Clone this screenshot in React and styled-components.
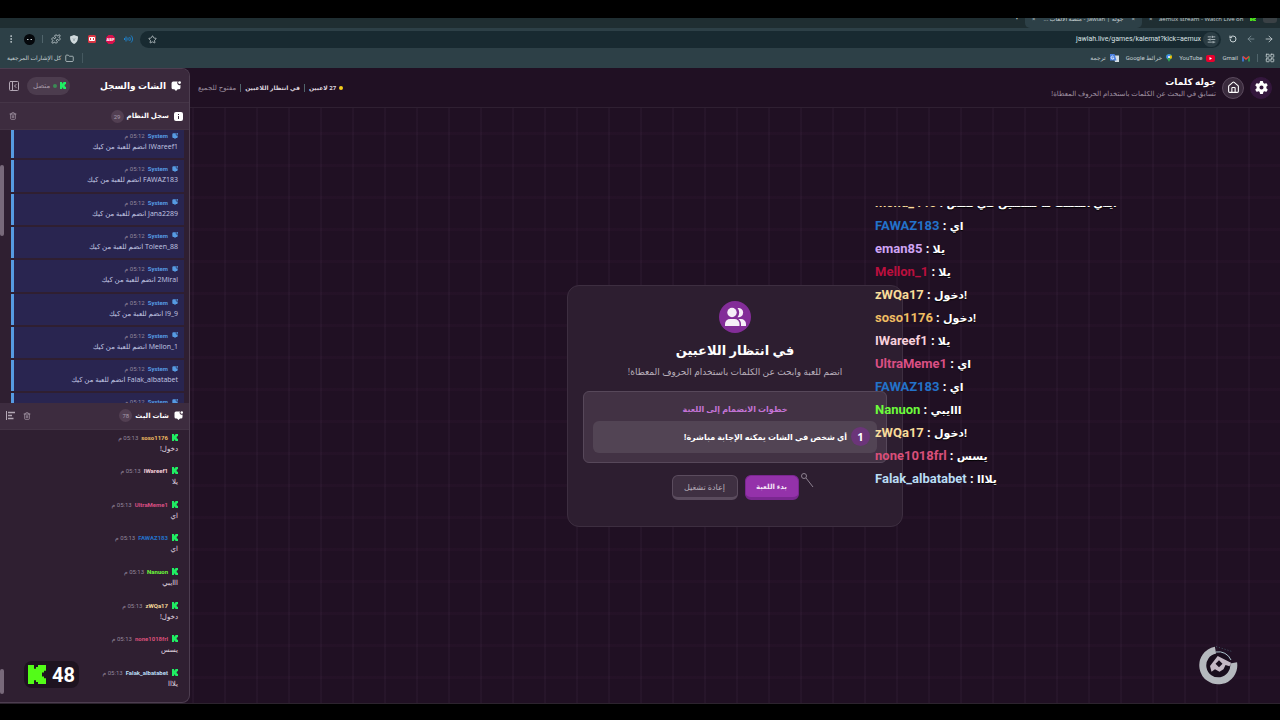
import React from 'react';
import styled, { createGlobalStyle } from 'styled-components';
import {
    EllipsisVertical, Puzzle, Star, RotateCw, ArrowLeft, ArrowRight, SlidersHorizontal,
    Folder, LayoutGrid, PanelLeftClose, Trash2, House,
} from 'lucide-react';
import { FaGear } from 'react-icons/fa6';

const GlobalStyle = createGlobalStyle`
    * { box-sizing: border-box; }
    body {
        margin: 0;
        background: #000000;
        font-family: "Open Sans", "DejaVu Sans", sans-serif;
        color: #ffffff;
    }
    button, input { font: inherit; color: inherit; padding: 0; border: 0; background: none; }
    ul, ol, p, h1, h2, h3 { margin: 0; padding: 0; list-style: none; }
    a { color: inherit; text-decoration: none; }
    svg { display: block; flex: none; }
`;

const Screen = styled.div`
    display: flex;
    flex-direction: column;
    height: 100vh;
    padding: 18px 0 16px;
    position: relative;
    overflow: hidden;
`;

/* ---------- browser ---------- */

const TabStrip = styled.div`
    display: flex;
    flex: none;
    height: 10px;
    padding-right: 3px;
    overflow: hidden;
    background: #1f2e32;
    color: #c3cdd0;
    font-size: 6px;
    line-height: 2px;
    white-space: nowrap;
`;

const Tab = styled.div`
    display: flex;
    justify-content: space-between;
    width: ${p => p.$width}px;
    padding: 0 7px;
    border-radius: 0 0 5px 5px;
    background: ${p => (p.$active ? '#2d4047' : 'transparent')};
`;

const TabAvatar = styled.span`
    width: 14px;
    height: 5px;
    border-radius: 0 0 3px 3px;
    background: #3a4145;
`;

const Toolbar = styled.div`
    display: flex;
    align-items: center;
    flex: none;
    gap: 6px;
    height: 22px;
    padding: 0 5px;
    background: #2d4047;
    color: #c9d3d6;
`;

const IconButton = styled.button`
    display: flex;
    align-items: center;
    justify-content: center;
    flex: none;
    width: 12px;
    height: 12px;
    color: ${p => p.$color || 'inherit'};
`;

const AddressBar = styled.div`
    display: flex;
    align-items: center;
    flex: 1;
    gap: 2px;
    height: 17px;
    padding: 0 2px 0 6px;
    border-radius: 9px;
    background: #182a31;
`;

const SiteButton = styled(IconButton)`
    width: 16px;
    height: 15px;
    border-radius: 8px;
    background: #2b3d44;
`;

const AddressInput = styled.input`
    flex: 1;
    min-width: 0;
    height: 14px;
    direction: ltr;
    text-align: right;
    font-family: Roboto, sans-serif;
    font-size: 7px;
    color: #dbe3e5;
    outline: none;
`;

const Divider = styled.span`
    width: 1px;
    height: 8px;
    background: #50646b;
`;

const Extensions = styled.div`
    display: flex;
    align-items: center;
    gap: 6px;

    ${Divider} {
        margin: 0 1px;
    }
`;

const Bookmarks = styled.nav`
    display: flex;
    align-items: center;
    flex: none;
    gap: 7px;
    height: 18px;
    padding: 0 5px 2px 7px;
    background: #2d4047;
    color: #c5d0d3;
    font-family: Roboto, "DejaVu Sans", sans-serif;
    font-size: 6px;
    line-height: 10px;
`;

const Bookmark = styled.a`
    display: flex;
    align-items: center;
    gap: 4px;
    margin-right: ${p => (p.$end ? 'auto' : '0')};
    padding-right: ${p => (p.$end ? '8px' : '0')};
    border-right: ${p => (p.$end ? '1px solid #455960' : '0')};
`;

/* ---------- game page ---------- */

const Page = styled.div`
    display: flex;
    flex: 1;
    min-height: 0;
    border-bottom: 1px solid #2c232e;
    background: #201023;
`;

const Main = styled.main`
    display: flex;
    flex-direction: column;
    flex: 1;
    min-width: 0;
`;

const TopBar = styled.header`
    display: flex;
    align-items: center;
    gap: 6px;
    height: 40px;
    padding: 0 8px;
    border-bottom: 1px solid #2f2032;
`;

const RoundButton = styled.button`
    display: flex;
    align-items: center;
    justify-content: center;
    width: 22px;
    height: 22px;
    border: 1px solid ${p => (p.$filled ? '#5a4a5d' : '#34173d')};
    border-radius: 50%;
    background: ${p => (p.$filled ? '#3a2b3d' : '#34173d')};
`;

const Title = styled.h1`
    font-size: 9px;
    line-height: 12px;
`;

const Subtitle = styled.p`
    color: #a093a3;
    font-size: 7px;
    line-height: 12px;
`;

const Status = styled.div`
    display: flex;
    align-items: center;
    gap: 4px;
    margin-right: auto;
    font-size: 6px;
    line-height: 10px;
    color: #ded5df;
`;

const StatusItem = styled.span`
    display: flex;
    align-items: center;
    gap: 3px;
    font-size: ${p => (p.$dim ? 7 : 6)}px;
    font-weight: ${p => (p.$dim ? 400 : 700)};
    color: ${p => (p.$dim ? '#9a8c9d' : 'inherit')};

    &::before {
        content: "";
        display: ${p => (p.$dot ? 'block' : 'none')};
        width: 4px;
        height: 4px;
        border-radius: 50%;
        background: #f5cf1b;
    }
`;

const Board = styled.section`
    display: flex;
    align-items: center;
    justify-content: center;
    flex: 1;
    background-image:
        linear-gradient(to right, rgba(120, 80, 125, 0.08) 2px, transparent 2px),
        linear-gradient(to bottom, rgba(110, 50, 100, 0.06) 3px, transparent 3px);
    background-size: 32px 32px;
    background-position: 2px 24px;
`;

const Lobby = styled.div`
    display: flex;
    flex-direction: column;
    align-items: center;
    width: 336px;
    padding: 15px 15px 26px;
    border: 1px solid #3d2e40;
    border-radius: 12px;
    background: #2d1e30;
`;

const LobbyIcon = styled.div`
    display: flex;
    align-items: center;
    justify-content: center;
    width: 32px;
    height: 32px;
    border-radius: 50%;
    background: #832d98;
`;

const LobbyTitle = styled.h2`
    margin-top: 6px;
    font-size: 13px;
    line-height: 22px;
`;

const LobbyText = styled.p`
    margin: 3px 0 11px;
    color: #b9afbb;
    font-size: 9px;
    line-height: 16px;
`;

const Steps = styled.div`
    width: 100%;
    padding: 9px;
    border: 1px solid #57485a;
    border-radius: 6px;
    background: #423244;
    text-align: center;
`;

const StepsTitle = styled.h3`
    margin-bottom: 4px;
    color: #c474d6;
    font-size: 8px;
    line-height: 16px;
`;

const Step = styled.li`
    display: flex;
    align-items: center;
    gap: 4px;
    height: 32px;
    padding: 0 7px;
    border-radius: 6px;
    background: #524454;
    font-size: 8px;
    font-weight: 700;
`;

const StepNumber = styled.span`
    width: 19px;
    border-radius: 50%;
    background: #6b3579;
    font-size: 11px;
    line-height: 19px;
`;

const Actions = styled.div`
    display: flex;
    gap: 7px;
    margin-top: 12px;
    position: relative;
`;

const ActionButton = styled.button`
    min-width: ${p => (p.$primary ? 54 : 66)}px;
    height: 25px;
    padding: 0 8px;
    border: 1px solid ${p => (p.$primary ? '#7a2790' : '#5b4c5e')};
    border-bottom-width: 3px;
    border-radius: 6px;
    background: ${p => (p.$primary ? '#9432aa' : '#3f3042')};
    color: ${p => (p.$primary ? '#f4e6f7' : '#b9afbb')};
    font-size: ${p => (p.$primary ? 7 : 8)}px;
    font-weight: ${p => (p.$primary ? 700 : 400)};
`;

const Pointer = styled.svg`
    position: absolute;
    top: -3px;
    right: -15px;
`;

/* ---------- sidebar ---------- */

const Sidebar = styled.aside`
    display: flex;
    flex-direction: column;
    flex: 0 0 190px;
    overflow: hidden;
    border: 1px solid #4d3e50;
    border-left: 0;
    border-radius: 0 8px 8px 0;
    background: #2f1f31;
`;

const SideHeader = styled.header`
    display: flex;
    align-items: center;
    gap: 5px;
    flex: none;
    height: 34px;
    padding: 0 8px;
    border-bottom: 1px solid #453547;
    background: #3a293c;
`;

const SideTitle = styled.h2`
    margin-left: auto;
    font-size: 9px;
    line-height: 16px;
`;

const Connected = styled.span`
    display: flex;
    align-items: center;
    gap: 3px;
    height: 18px;
    margin-left: 3px;
    padding: 0 4px 0 6px;
    border-radius: 9px;
    background: #4c3c4e;
    color: #a69aa8;
    font-size: 7px;
`;

const OnlineDot = styled.i`
    width: 4px;
    height: 4px;
    border-radius: 50%;
    background: #3b8b54;
`;

const SectionHeader = styled.header`
    display: flex;
    align-items: center;
    gap: 5px;
    flex: none;
    height: 27px;
    padding: 0 6px 0 ${p => (p.$tight ? 5 : 7)}px;
    border-bottom: 1px solid #433345;
    background: #3d2c3f;
    color: #ffffff;
`;

const SectionTitle = styled.h3`
    font-size: 7px;
    line-height: 12px;
`;

const Count = styled.span`
    min-width: 13px;
    margin: 0 -2px 0 auto;
    border-radius: 7px;
    background: #523f52;
    color: #a89cad;
    font-family: Roboto, sans-serif;
    font-size: 6px;
    line-height: 13px;
    text-align: center;
`;

const SmallButton = styled(IconButton)`
    width: 11px;
    color: #b3a7b5;
`;

const ListArea = styled.div`
    flex: 1 1 0;
    min-height: 0;
    overflow: hidden;
    position: relative;
    padding: 0 5px 0 11px;
`;

const Thumb = styled.span`
    position: absolute;
    left: 0;
    top: ${p => p.$top};
    width: 4px;
    height: ${p => p.$size};
    border-radius: 2px;
    background: #78697a;
`;

const SystemList = styled.ul`
    display: grid;
    grid-auto-rows: 1fr;
    height: 110%;
    margin-top: -3px;
`;

const ChatList = styled.ul`
    display: flex;
    flex-direction: column;
    justify-content: space-between;
    height: 100%;
    padding-bottom: 12px;
`;

const Entry = styled.li`
    padding: ${p => (p.$system ? 3 : 2)}px 6px 0;
    border-bottom: ${p => (p.$system ? '2px solid #2f1f31' : '0')};
    background: ${p => (p.$system ? '#292550' : 'transparent')};
    box-shadow: ${p => (p.$system ? 'inset 3px 0 #569be2' : 'none')};
    color: ${p => (p.$system ? '#c3c8e4' : '#e2dae3')};
    font-size: 7px;
    line-height: 12px;
`;

const EntryHead = styled.div`
    display: flex;
    align-items: center;
    gap: 3px;
    color: ${p => p.$color};
    font-family: Roboto, "DejaVu Sans", sans-serif;
    font-size: 6px;
    line-height: 11px;

    b { margin-right: 1px; }
`;

const Time = styled.time`
    color: #93879c;
`;

/* ---------- stream overlays ---------- */

const StreamChat = styled.ul`
    display: flex;
    flex-direction: column;
    justify-content: flex-end;
    position: absolute;
    left: 875px;
    top: 206px;
    height: 284px;
    overflow: hidden;
    direction: ltr;
    font-family: Roboto, "DejaVu Sans", sans-serif;
    font-size: 13px;
    font-weight: 700;
    white-space: nowrap;
`;

const StreamLine = styled.li`
    flex: none;
    height: 23px;
    line-height: 23px;
`;

const StreamName = styled.span`
    color: ${p => p.$color};
`;

const Said = styled.span`
    font-size: 11px;
    line-height: 11px;
    text-shadow: 0 1px 1px #000000;
`;

const KickCount = styled.div`
    display: flex;
    align-items: center;
    gap: 6px;
    position: absolute;
    left: 24px;
    bottom: 32px;
    height: 27px;
    padding: 0 4px;
    border-radius: 8px;
    background: #1e1320;
    direction: ltr;
    font-family: Roboto, sans-serif;
    font-size: 20px;
    font-weight: 700;
`;

const Watermark = styled.svg`
    position: absolute;
    right: 41px;
    bottom: 35px;
`;

const KickIcon = ({ width = 6, height = 7, color = '#1fee63' }) => (
    <svg width={width} height={height} viewBox="0 0 18 20" preserveAspectRatio="none" fill={color}>
        <path d="M0 0h6v4h2V2h2V0h8v6h-2v2h-2v4h2v2h2v6h-8v-2H8v-2H6v4H0z" />
    </svg>
);

const ChatIcon = ({ size = 9 }) => (
    <svg width={size} height={size} viewBox="0 0 18 18" fill="currentColor">
        <path d="M4 1h8a4 4 0 0 0 5 6v5a3 3 0 0 1-3 3h-2l-3 3-3-3H4a3 3 0 0 1-3-3V4a3 3 0 0 1 3-3z" />
        <circle cx="15.500" cy="2.800" r="2.500" />
    </svg>
);

const InfoIcon = () => (
    <svg width="9" height="9" viewBox="0 0 18 18">
        <rect width="18" height="18" rx="4" fill="#ffffff" />
        <path d="M9 8v6M9 4v2" stroke="#3d2c3f" strokeWidth="2" />
    </svg>
);

const AlignIcon = () => (
    <svg width="9" height="9" viewBox="0 0 18 18" stroke="currentColor" strokeWidth="2">
        <path d="M1 0v18" />
        <path d="M4 3h14M4 9h8M4 15h11" strokeWidth="3" />
    </svg>
);

const UsersIcon = () => (
    <svg width="21" height="20" viewBox="0 0 21 20" fill="#f6eef8">
        <path d="M12.500 1a4.700 4.700 0 1 1 0 9.200 7 7 0 0 0 0-9.200zM13.500 12H16a5 5 0 0 1 5 5v2h-5v-2c0-2-.8-3.800-2.500-5z" />
        <circle cx="7" cy="5.500" r="4.700" />
        <path d="M5 12h4.500a5 5 0 0 1 5 5v2H0v-2a5 5 0 0 1 5-5z" />
    </svg>
);

const GmailIcon = () => (
    <svg width="8" height="7" viewBox="0 0 16 14" fill="none" strokeWidth="3">
        <path d="M2 13V3" stroke="#4285f4" />
        <path d="M14 13V3" stroke="#34a853" />
        <path d="M2 3l6 5 6-5" stroke="#ea4335" />
    </svg>
);

const YouTubeIcon = () => (
    <svg width="9" height="7" viewBox="0 0 18 14">
        <rect width="18" height="14" rx="4" fill="#e8002d" />
        <path d="M7 4l5 3-5 3z" fill="#ffffff" />
    </svg>
);

const MapsIcon = () => (
    <svg width="6" height="8" viewBox="0 0 12 16">
        <path d="M6 0a6 6 0 0 1 6 6c0 4-5 5-6 10C5 11 0 10 0 6a6 6 0 0 1 6-6z" fill="#34a853" />
        <path d="M1 3a6 6 0 0 1 9-1L3 10C1 8 0 7 1 3z" fill="#4285f4" />
        <path d="M10 2c2 2 3 5 0 8L6 7z" fill="#fbbc04" />
        <circle cx="6" cy="6" r="2" fill="#ffffff" />
    </svg>
);

const TranslateIcon = () => (
    <svg width="9" height="8" viewBox="0 0 18 16">
        <path d="M7 3h11v13h-8z" fill="#d5dde3" />
        <path d="M0 0h9l4 13H0z" fill="#4a7fe0" />
        <path d="M7 5a3 3 0 1 0 1 3H5" fill="none" stroke="#ffffff" strokeWidth="1.500" />
    </svg>
);

const ShieldIcon = () => (
    <svg width="8" height="9" viewBox="0 0 16 18">
        <path d="M8 0l8 3c0 8-2 12-8 15C2 15 0 11 0 3z" fill="#cfd9dc" />
        <path d="M6 7l2 2 2-2M8 9v3" fill="none" stroke="#8a9ba1" strokeWidth="2" />
    </svg>
);

const RedIcon = () => (
    <svg width="8" height="8" viewBox="0 0 16 16">
        <rect width="16" height="16" rx="3" fill="#d93644" />
        <rect x="2" y="4" width="12" height="8" rx="2" fill="#ffffff" />
        <path d="M5 6v4M11 6v4" stroke="#d93644" strokeWidth="2" />
    </svg>
);

const BlockIcon = () => (
    <svg width="9" height="9" viewBox="0 0 18 18">
        <path d="M5 0h8l5 5v8l-5 5H5l-5-5V5z" fill="#d9104c" />
        <text x="9" y="12" fontSize="8" fontWeight="700" textAnchor="middle" fill="#ffffff">ABP</text>
    </svg>
);

const WavesIcon = () => (
    <svg width="9" height="8" viewBox="0 0 18 16" fill="none" stroke="#1e82cf" strokeWidth="2">
        <path d="M1 6v4M4 3v10M8 5v6M11 4c2 2 2 6 0 8M14 1c4 4 4 10 0 14" />
    </svg>
);

const ProfileIcon = () => (
    <svg width="11" height="11" viewBox="0 0 22 22">
        <circle cx="11" cy="11" r="11" fill="#05080c" />
        <path d="M6 11h3M13 11h3" stroke="#c9d3d6" strokeWidth="2" />
    </svg>
);

const joined = ['IWareef1', 'FAWAZ183', 'Jana2289', 'Toleen_88', '2Miral', 'I9_9', 'Mellon_1', 'Falak_albatabet', 'eman85'];

const colors = {
    soso1176: '#f0bd62',
    IWareef1: '#f7d0dc',
    UltraMeme1: '#d94f83',
    FAWAZ183: '#2372ca',
    Nanuon: '#6dfb3c',
    zWQa17: '#f8dc9a',
    none1018frl: '#d94f79',
    Falak_albatabet: '#b9dcf4',
    eman85: '#cfa4f4',
    Mellon_1: '#bb0f3e',
    mohd_445: '#f8dc9a',
};

const messages = [
    ['soso1176', 'دخول!'],
    ['IWareef1', 'يلا'],
    ['UltraMeme1', 'اي'],
    ['FAWAZ183', 'اي'],
    ['Nanuon', 'ااايبي'],
    ['zWQa17', 'دخول!'],
    ['none1018frl', 'يسس'],
    ['Falak_albatabet', 'يلااا'],
];

const earlier = [
    ['mohd_445', 'ايلي انتقلت ما تنتقلين في نفس'],
    ['FAWAZ183', 'اي'],
    ['eman85', 'يلا'],
    ['Mellon_1', 'يلا'],
    ['zWQa17', 'دخول!'],
];

const Browser = () => (
    <>
        <TabStrip>
            <TabAvatar />
            <Tab $width={121}>
                <KickIcon height={3} color="#4be01c" />
                <span dir="ltr">aemux stream - Watch Live on</span>
                <span>×</span>
            </Tab>
            <Tab $width={117} $active>
                <span>×</span>
                <span>جوله | Jawlah - منصة الألعاب ...</span>
                <span>×</span>
            </Tab>
            <Tab $width={20}><span>•</span></Tab>
        </TabStrip>
        <Toolbar>
            <IconButton aria-label="التالي"><ArrowRight size={10} /></IconButton>
            <IconButton aria-label="السابق" $color="#7d9097"><ArrowLeft size={10} /></IconButton>
            <IconButton aria-label="إعادة تحميل"><RotateCw size={8} strokeWidth={3} transform="scale(-1 1)" /></IconButton>
            <AddressBar>
                <SiteButton aria-label="معلومات الموقع"><SlidersHorizontal size={9} /></SiteButton>
                <AddressInput aria-label="العنوان" defaultValue="jawlah.live/games/kalemat?kick=aemux" />
                <IconButton aria-label="إشارة مرجعية"><Star size={9} /></IconButton>
            </AddressBar>
            <Extensions>
                <IconButton aria-label="الصوت"><WavesIcon /></IconButton>
                <IconButton aria-label="ABP"><BlockIcon /></IconButton>
                <IconButton aria-label="إضافة"><RedIcon /></IconButton>
                <IconButton aria-label="الحماية"><ShieldIcon /></IconButton>
                <IconButton aria-label="الإضافات"><Puzzle size={10} /></IconButton>
                <Divider />
                <IconButton aria-label="الحساب"><ProfileIcon /></IconButton>
                <IconButton aria-label="القائمة"><EllipsisVertical size={10} /></IconButton>
            </Extensions>
        </Toolbar>
        <Bookmarks>
            <LayoutGrid size={10} />
            <Divider />
            <Bookmark href="#gmail"><GmailIcon />Gmail</Bookmark>
            <Bookmark href="#youtube"><YouTubeIcon />YouTube</Bookmark>
            <Bookmark href="#maps"><MapsIcon />خرائط Google</Bookmark>
            <Bookmark href="#translate"><TranslateIcon />ترجمة</Bookmark>
            <Bookmark href="#all" $end><Folder size={9} />كل الإشارات المرجعية</Bookmark>
        </Bookmarks>
    </>
);

const Game = () => (
    <Main>
        <TopBar>
            <RoundButton aria-label="الإعدادات"><FaGear size={13} /></RoundButton>
            <RoundButton aria-label="الرئيسية" $filled><House size={13} /></RoundButton>
            <div>
                <Title>جوله كلمات</Title>
                <Subtitle>تسابق في البحث عن الكلمات باستخدام الحروف المعطاة!</Subtitle>
            </div>
            <Status>
                <StatusItem $dot>27 لاعبين</StatusItem>
                <Divider />
                <StatusItem>في انتظار اللاعبين</StatusItem>
                <Divider />
                <StatusItem $dim>مفتوح للجميع</StatusItem>
            </Status>
        </TopBar>
        <Board>
            <Lobby>
                <LobbyIcon><UsersIcon /></LobbyIcon>
                <LobbyTitle>في انتظار اللاعبين</LobbyTitle>
                <LobbyText>انضم للعبة وابحث عن الكلمات باستخدام الحروف المعطاة!</LobbyText>
                <Steps>
                    <StepsTitle>خطوات الانضمام إلى اللعبة</StepsTitle>
                    <ol>
                        <Step><StepNumber>1</StepNumber>أي شخص في الشات يمكنه الإجابة مباشرة!</Step>
                    </ol>
                </Steps>
                <Actions>
                    <ActionButton $primary>بدء اللعبة</ActionButton>
                    <ActionButton>إعادة تشغيل</ActionButton>
                    <Pointer width="14" height="16" viewBox="0 0 14 16" fill="none" stroke="#8d8190">
                        <circle cx="4" cy="4" r="2.500" />
                        <path d="M6 6l7 9" />
                    </Pointer>
                </Actions>
            </Lobby>
        </Board>
    </Main>
);

const Chat = () => (
    <Sidebar>
        <SideHeader>
            <ChatIcon size={10} />
            <SideTitle>الشات والسجل</SideTitle>
            <Connected><KickIcon /><OnlineDot />متصل</Connected>
            <SmallButton aria-label="إخفاء"><PanelLeftClose size={12} /></SmallButton>
        </SideHeader>
        <SectionHeader>
            <InfoIcon />
            <SectionTitle>سجل النظام</SectionTitle>
            <Count>29</Count>
            <SmallButton aria-label="مسح السجل"><Trash2 size={8} /></SmallButton>
        </SectionHeader>
        <ListArea>
            <Thumb $top="13%" $size="26%" />
            <SystemList>
                {joined.map(name => (
                    <Entry key={name} $system>
                        <EntryHead $color="#569be2">
                            <ChatIcon size={6} />
                            <b>System</b>
                            <Time>05:12 م</Time>
                        </EntryHead>
                        {name} انضم للعبة من كيك
                    </Entry>
                ))}
            </SystemList>
        </ListArea>
        <SectionHeader $tight>
            <ChatIcon />
            <SectionTitle>شات البث</SectionTitle>
            <Count>78</Count>
            <SmallButton aria-label="مسح الشات"><Trash2 size={8} /></SmallButton>
            <SmallButton aria-label="محاذاة"><AlignIcon /></SmallButton>
        </SectionHeader>
        <ListArea>
            <Thumb $top="88%" $size="9%" />
            <ChatList>
                {messages.map(([name, text]) => (
                    <Entry key={name}>
                        <EntryHead $color={colors[name]}>
                            <KickIcon />
                            <b>{name}</b>
                            <Time>05:13 م</Time>
                        </EntryHead>
                        {text}
                    </Entry>
                ))}
            </ChatList>
        </ListArea>
    </Sidebar>
);

const App = () => {
    return (
        <Screen dir="rtl">
            <GlobalStyle />
            <Browser />
            <Page>
                <Game />
                <Chat />
            </Page>
            <StreamChat>
                {[...earlier, ...messages].map(([name, text], i) => (
                    <StreamLine key={i}>
                        <StreamName $color={colors[name]}>{name}</StreamName> : <Said>{text}</Said>
                    </StreamLine>
                ))}
            </StreamChat>
            <KickCount><KickIcon width={18} height={19} color="#53fc18" />48</KickCount>
            <Watermark width="42" height="42" viewBox="0 0 42 42">
                <circle cx="21.300" cy="22.300" r="12" fill="#180d1c" />
                <path d="M18.500 7.100A15.500 15.500 0 1 0 36.600 19.900" fill="none" stroke="#b5b9be" strokeWidth="7" />
                <path d="M19 9a13.500 13.500 0 0 1 15 8" fill="none" stroke="#a9c3cb" />
                <path d="M19 3.500l16 5" stroke="#3f5261" strokeDasharray="1 2" />
                <path
                    fillRule="evenodd"
                    fill="#c4b8c4"
                    d="M20.700 13L34 19.700l-1.500 3.500-4-1.200-2 4.300-4 2.500-4.500-2.500-3.500 2.500L13 23zM22 17.200l-3.500 3.500 3.500 3.500 3.500-3.500z"
                />
            </Watermark>
        </Screen>
    );
};

export default App;
